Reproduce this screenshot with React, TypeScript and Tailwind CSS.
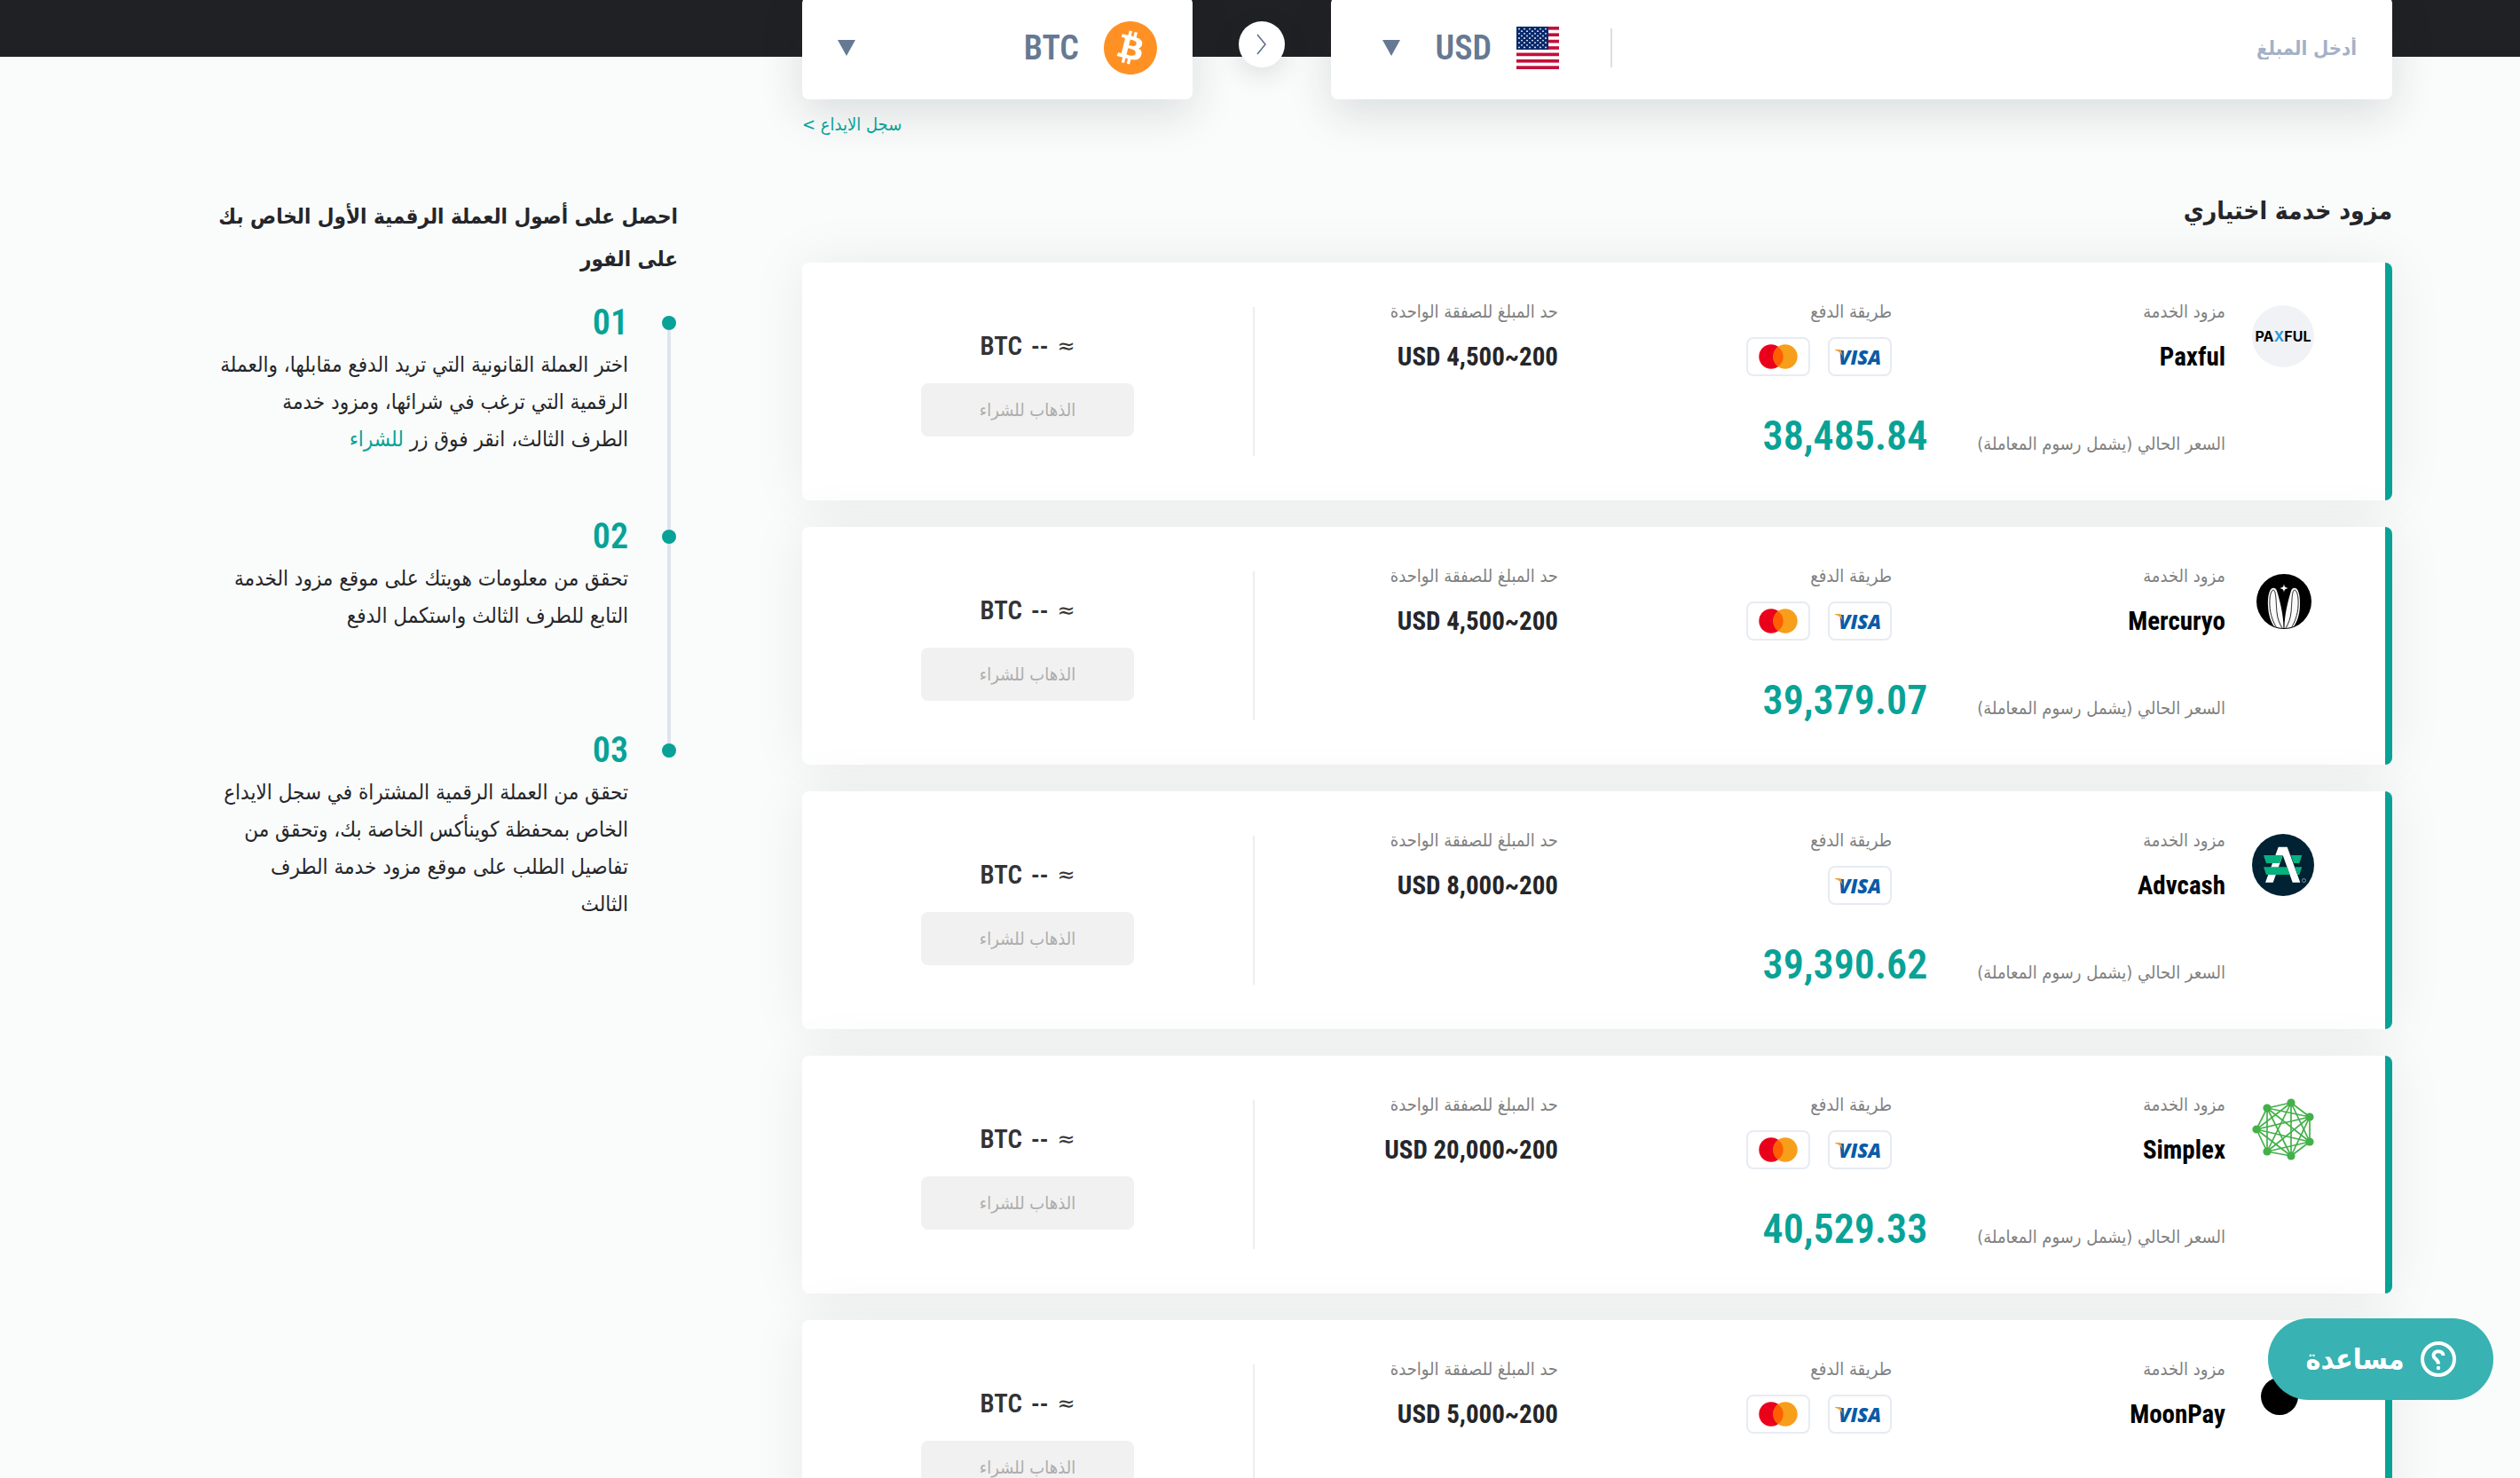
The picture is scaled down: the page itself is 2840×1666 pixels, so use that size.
import type { ReactNode } from "react";
import { SiBitcoin } from "react-icons/si";

type Payment = "visa" | "mastercard";

type Provider = {
  name: string;
  limit: string;
  price: string;
  payments: Payment[];
  logo: ReactNode;
};

type Step = {
  no: string;
  content: ReactNode;
};

const SIMPLEX_NODES = [
  [44, 5],
  [65, 21],
  [65, 49],
  [44, 65],
  [17, 60],
  [5, 35],
  [17, 11],
];

function PaxfulLogo() {
  return (
    <div
      dir="ltr"
      className="flex size-[70px] items-center justify-center rounded-full bg-[#f1f2f6] font-['Inter','Liberation_Sans',sans-serif] text-base font-bold text-black"
    >
      PA<span className="text-[#2d9cdb]">X</span>FUL
    </div>
  );
}

function MercuryoLogo() {
  return (
    <svg viewBox="0 0 70 70" className="size-[70px]" aria-hidden="true">
      <defs>
        <clipPath id="mercuryo-circle">
          <circle cx="36" cy="36" r="30" />
        </clipPath>
      </defs>
      <circle cx="36" cy="36" r="31" fill="#000" />
      <g clipPath="url(#mercuryo-circle)">
        {["", "matrix(-1 0 0 1 72 0)"].map((transform) => (
          <g key={transform} transform={transform}>
            <path
              d="M23 21C19 22 17.500 32 18 41C18.500 51 21 59 26 66H35.500C35.500 50 31 34 28 24C27 21 25 20.500 23 21Z"
              fill="#fafafa"
            />
            <path
              d="M24 23C20.500 24 19.500 33 20 41C20.500 51 24 60 28 66M24 23C27.500 23 27 40 28 48C28.500 55 31 61 34 66"
              fill="none"
              stroke="#111"
              strokeWidth="0.9"
            />
          </g>
        ))}
      </g>
      <path
        d="M36 16C36.500 19.500 37 20.200 41 21C37 21.800 36.500 22.500 36 26C35.500 22.500 35 21.800 31 21C35 20.200 35.500 19.500 36 16Z"
        fill="#fff"
      />
    </svg>
  );
}

function AdvcashLogo() {
  return (
    <svg viewBox="0 0 70 70" className="size-[70px]" aria-hidden="true">
      <circle cx="35" cy="35" r="35" fill="#002233" />
      <path
        d="M29.700 14.700H39.700L54.300 54.700H45.700L34.700 24L23.700 54.700H15Z"
        fill="#fff"
      />
      <g fill="#05b17e">
        <path d="M13 24H34.700L31.300 33H16Z" />
        <path d="M43.700 24H56.300L53.300 33H47Z" />
        <path d="M13 37.300H39.500L42.700 46H16Z" />
        <path d="M48.300 37.300H56.300L53.300 46H51.500Z" />
      </g>
      <circle cx="58.500" cy="52.500" r="2" fill="none" stroke="#8b98a0" />
    </svg>
  );
}

function SimplexLogo() {
  return (
    <svg viewBox="0 0 70 70" className="size-[70px]" aria-hidden="true">
      <g stroke="#43b049" strokeWidth="1.700">
        {SIMPLEX_NODES.map(([x1, y1], i) =>
          SIMPLEX_NODES.slice(i + 1).map(([x2, y2]) => (
            <line key={`${x1}-${y1}-${x2}-${y2}`} x1={x1} y1={y1} x2={x2} y2={y2} />
          )),
        )}
      </g>
      {SIMPLEX_NODES.map(([cx, cy]) => (
        <circle key={`${cx}-${cy}`} cx={cx} cy={cy} r="4.600" fill="#43b049" />
      ))}
    </svg>
  );
}

function MoonPayLogo() {
  return (
    <svg viewBox="0 0 70 70" className="size-[70px]" aria-hidden="true">
      <circle cx="31" cy="38" r="21" fill="#000" />
      <circle cx="53" cy="17" r="6" fill="#000" />
    </svg>
  );
}

function UsFlag() {
  return (
    <svg viewBox="0 0 48 48" className="size-12 shrink-0" aria-hidden="true">
      <rect width="48" height="48" fill="#fff" />
      {[0, 1, 2, 3, 4, 5, 6].map((i) => (
        <rect key={i} y={(i * 96) / 13} width="48" height={48 / 13} fill="#c20f3a" />
      ))}
      <rect width="36" height="25.850" fill="#06286b" />
      {[0, 1, 2, 3, 4, 5, 6, 7, 8].map((row) =>
        (row % 2 === 0 ? [0, 1, 2, 3, 4, 5] : [0, 1, 2, 3, 4]).map((col) => (
          <circle
            key={`${row}-${col}`}
            cx={3 + col * 6 + (row % 2) * 3}
            cy={2.6 + row * 2.6}
            r="0.9"
            fill="#fff"
          />
        )),
      )}
    </svg>
  );
}

function CaretDown() {
  return (
    <svg
      viewBox="0 0 20 18"
      className="pointer-events-none h-[18px] w-5 shrink-0 fill-[#667992]"
      aria-hidden="true"
    >
      <path d="M0 0H20L10 18Z" />
    </svg>
  );
}

function PaymentBadge({ type }: { type: Payment }) {
  return (
    <div className="flex h-11 w-[72px] items-center justify-center rounded-lg border-2 border-[#e7ebf2] bg-white">
      {type === "visa" ? (
        <span
          dir="ltr"
          className="relative font-['Open_Sans','Liberation_Sans',sans-serif] text-[22px] leading-none font-extrabold text-[#0a5ba6] italic"
        >
          VISA
          <svg
            viewBox="0 0 10 9"
            className="absolute top-[3px] -left-1 h-[9px] w-2.5"
            aria-hidden="true"
          >
            <path d="M0 0H6.500L9 8C7 4 4 1.800 0 0.800Z" fill="#f0a13a" />
          </svg>
        </span>
      ) : (
        <svg viewBox="0 0 44 28" className="h-7 w-11" aria-label="Mastercard">
          <circle cx="14" cy="14" r="13.700" fill="#eb001b" />
          <circle cx="30" cy="14" r="13.700" fill="#f79e1b" />
          <path d="M22 2.900A13.700 13.700 0 0 1 22 25.100A13.700 13.700 0 0 1 22 2.900Z" fill="#ff5f00" />
        </svg>
      )}
    </div>
  );
}

const providers: Provider[] = [
  {
    name: "Paxful",
    limit: "200~4,500 USD",
    price: "38,485.84",
    payments: ["visa", "mastercard"],
    logo: <PaxfulLogo />,
  },
  {
    name: "Mercuryo",
    limit: "200~4,500 USD",
    price: "39,379.07",
    payments: ["visa", "mastercard"],
    logo: <MercuryoLogo />,
  },
  {
    name: "Advcash",
    limit: "200~8,000 USD",
    price: "39,390.62",
    payments: ["visa"],
    logo: <AdvcashLogo />,
  },
  {
    name: "Simplex",
    limit: "200~20,000 USD",
    price: "40,529.33",
    payments: ["visa", "mastercard"],
    logo: <SimplexLogo />,
  },
  {
    name: "MoonPay",
    limit: "200~5,000 USD",
    price: "40,899.50",
    payments: ["visa", "mastercard"],
    logo: <MoonPayLogo />,
  },
];

const steps: Step[] = [
  {
    no: "01",
    content: (
      <>
        اختر العملة القانونية التي تريد الدفع مقابلها، والعملة
        <br />
        الرقمية التي ترغب في شرائها، ومزود خدمة
        <br />
        الطرف الثالث، انقر فوق زر <span className="text-[#08a297]">للشراء</span>
      </>
    ),
  },
  {
    no: "02",
    content: (
      <>
        تحقق من معلومات هويتك على موقع مزود الخدمة
        <br />
        التابع للطرف الثالث واستكمل الدفع
      </>
    ),
  },
  {
    no: "03",
    content: (
      <>
        تحقق من العملة الرقمية المشتراة في سجل الايداع
        <br />
        الخاص بمحفظة كوينأكس الخاصة بك، وتحقق من
        <br />
        تفاصيل الطلب على موقع مزود خدمة الطرف
        <br />
        الثالث
      </>
    ),
  },
];

function ProviderCard({ provider }: { provider: Provider }) {
  return (
    <li className="flex items-center overflow-hidden rounded-lg bg-white shadow-[0_0_64px_rgba(0,0,0,0.07)]">
      <span className="w-2 shrink-0 self-stretch bg-[#08a297]" />
      <div className="flex flex-1 gap-[30px] py-10 pr-20">
        <div className="mt-2 shrink-0">{provider.logo}</div>
        <div className="flex-1">
          <dl className="grid grid-cols-[376fr_376fr_342fr]">
            <div className="flex flex-col gap-3.5">
              <dt className="text-xl leading-[30px] text-[#818181]">مزود الخدمة</dt>
              <dd className="font-['Roboto_Condensed',Roboto,sans-serif] text-[29px] leading-[44px] font-bold text-black">
                {provider.name}
              </dd>
            </div>
            <div className="flex flex-col gap-3.5">
              <dt className="text-xl leading-[30px] text-[#818181]">طريقة الدفع</dt>
              <dd className="flex gap-5">
                {provider.payments.map((payment) => (
                  <PaymentBadge key={payment} type={payment} />
                ))}
              </dd>
            </div>
            <div className="flex flex-col gap-3.5">
              <dt className="text-xl leading-[30px] text-[#818181]">حد المبلغ للصفقة الواحدة</dt>
              <dd className="font-['Roboto_Condensed',Roboto,sans-serif] text-[29px] leading-[44px] font-bold text-[#25262a]">
                {provider.limit}
              </dd>
            </div>
          </dl>
          <p className="mt-9 flex h-16 items-baseline gap-14">
            <span className="text-xl text-[#818181]">السعر الحالي (يشمل رسوم المعاملة)</span>
            <span className="font-['Roboto_Condensed',Roboto,sans-serif] text-[46px] leading-[62px] font-semibold text-[#08a297]">
              {provider.price}
            </span>
          </p>
        </div>
      </div>
      <div className="flex h-[168px] w-[510px] shrink-0 flex-col items-center justify-center gap-6 border-r-2 border-[#ededed] pt-1">
        <p className="flex items-center gap-2.5 font-['Roboto_Condensed',Roboto,sans-serif] text-[29px] leading-9 font-semibold text-[#333]">
          <span className="font-['DejaVu_Sans',sans-serif] text-2xl font-normal">≈</span>
          <span>--</span>
          <span>BTC</span>
        </p>
        <button
          type="button"
          disabled
          className="h-[60px] w-60 rounded-lg bg-[#f1f1f1] text-xl text-[#adadad]"
        >
          الذهاب للشراء
        </button>
      </div>
    </li>
  );
}

function StepItem({ step, last }: { step: Step; last: boolean }) {
  return (
    <li className="flex gap-[38px] pr-0.5">
      <div className="flex w-4 shrink-0 flex-col items-center">
        <span className={`h-[18px] w-1 ${step.no === "01" ? "" : "bg-[#dfe3ee]"}`} />
        <span className="size-4 shrink-0 rounded-full bg-[#08a297]" />
        {!last && <span className="w-1 flex-1 bg-[#dfe3ee]" />}
      </div>
      <div className="min-h-[241px] flex-1">
        <h3 className="font-['Roboto_Condensed',Roboto,sans-serif] text-[40px] leading-[52px] font-semibold text-[#08a297]">
          {step.no}
        </h3>
        <p className="text-2xl leading-[42px] whitespace-nowrap text-[#25262a]">{step.content}</p>
      </div>
    </li>
  );
}

function App() {
  return (
    <div
      dir="rtl"
      className="h-screen overflow-hidden bg-[#fafcfb] font-['DejaVu_Sans_Condensed','DejaVu_Sans',sans-serif]"
    >
      <div className="h-16 bg-[#202124]" />
      <div className="-mt-[68px] flex gap-[140px] pr-36 pl-[246px]">
        <main className="flex-1">
          <form className="flex h-[116px] items-center">
            <div className="flex h-full flex-1 items-center rounded-lg bg-white pr-10 pl-[58px] shadow-[0_16px_50px_rgba(30,32,50,0.14)]">
              <input
                type="text"
                aria-label="أدخل المبلغ"
                placeholder="أدخل المبلغ"
                className="min-w-0 flex-1 bg-transparent text-[22px] font-semibold outline-none placeholder:text-[#a3b1c6]"
              />
              <span className="ml-[58px] h-11 w-0.5 bg-[#dedede]" />
              <UsFlag />
              <select
                aria-label="العملة القانونية"
                defaultValue="USD"
                className="mr-7 w-[103px] appearance-none bg-transparent font-['Roboto_Condensed',Roboto,sans-serif] text-[38px] font-semibold text-[#667992] outline-none"
              >
                <option value="USD">USD</option>
              </select>
              <CaretDown />
            </div>
            <div className="flex w-[156px] shrink-0 justify-center pb-2">
              <div className="flex size-[52px] items-center justify-center rounded-full bg-white shadow-[0_8px_30px_rgba(30,32,50,0.14)]">
                <svg viewBox="0 0 12 24" className="h-6 w-3" aria-hidden="true">
                  <path d="M1 1L10 12L1 23" fill="none" stroke="#5b6b85" strokeWidth="1.500" />
                </svg>
              </div>
            </div>
            <div className="flex h-full w-[440px] items-center rounded-lg bg-white px-10 shadow-[0_16px_50px_rgba(30,32,50,0.14)]">
              <SiBitcoin className="size-[60px] shrink-0 text-[#ff9124]" />
              <select
                aria-label="العملة الرقمية"
                defaultValue="BTC"
                className="mr-7 min-w-0 flex-1 appearance-none bg-transparent font-['Roboto_Condensed',Roboto,sans-serif] text-[38px] font-semibold text-[#667992] outline-none"
              >
                <option value="BTC">BTC</option>
              </select>
              <CaretDown />
            </div>
          </form>
          <div className="mt-3 flex justify-end">
            <a href="#records" className="text-xl leading-8 text-[#08a297]">
              سجل الايداع &gt;
            </a>
          </div>
          <h2 className="mt-[58px] text-[28px] leading-[48px] font-bold text-[#25262a]">
            مزود خدمة اختياري
          </h2>
          <ul className="mt-[34px] flex flex-col gap-[30px]">
            {providers.map((provider) => (
              <ProviderCard key={provider.name} provider={provider} />
            ))}
          </ul>
        </main>
        <aside className="w-[518px] shrink-0 pt-56">
          <h2 className="text-2xl leading-[48px] font-bold text-[#25262a]">
            احصل على أصول العملة الرقمية الأول الخاص بك على الفور
          </h2>
          <ol className="mt-[22px]">
            {steps.map((step, i) => (
              <StepItem key={step.no} step={step} last={i === steps.length - 1} />
            ))}
          </ol>
        </aside>
      </div>
      <button
        type="button"
        className="fixed right-[30px] bottom-[88px] flex h-[92px] w-[254px] items-center justify-center gap-[18px] rounded-full bg-[#38b2b2] text-[32px] font-bold text-white"
      >
        <svg
          viewBox="0 0 40 40"
          className="size-10 -scale-x-100"
          fill="none"
          stroke="currentColor"
          strokeWidth="4"
          aria-hidden="true"
        >
          <circle cx="20" cy="20" r="18" />
          <path d="M14.500 16C14.500 9.500 25.500 9.500 25.500 16C25.500 20 20 19.500 20 25.500" />
          <circle cx="20" cy="30" r="2.200" fill="currentColor" stroke="none" />
        </svg>
        مساعدة
      </button>
    </div>
  );
}

export default App;
